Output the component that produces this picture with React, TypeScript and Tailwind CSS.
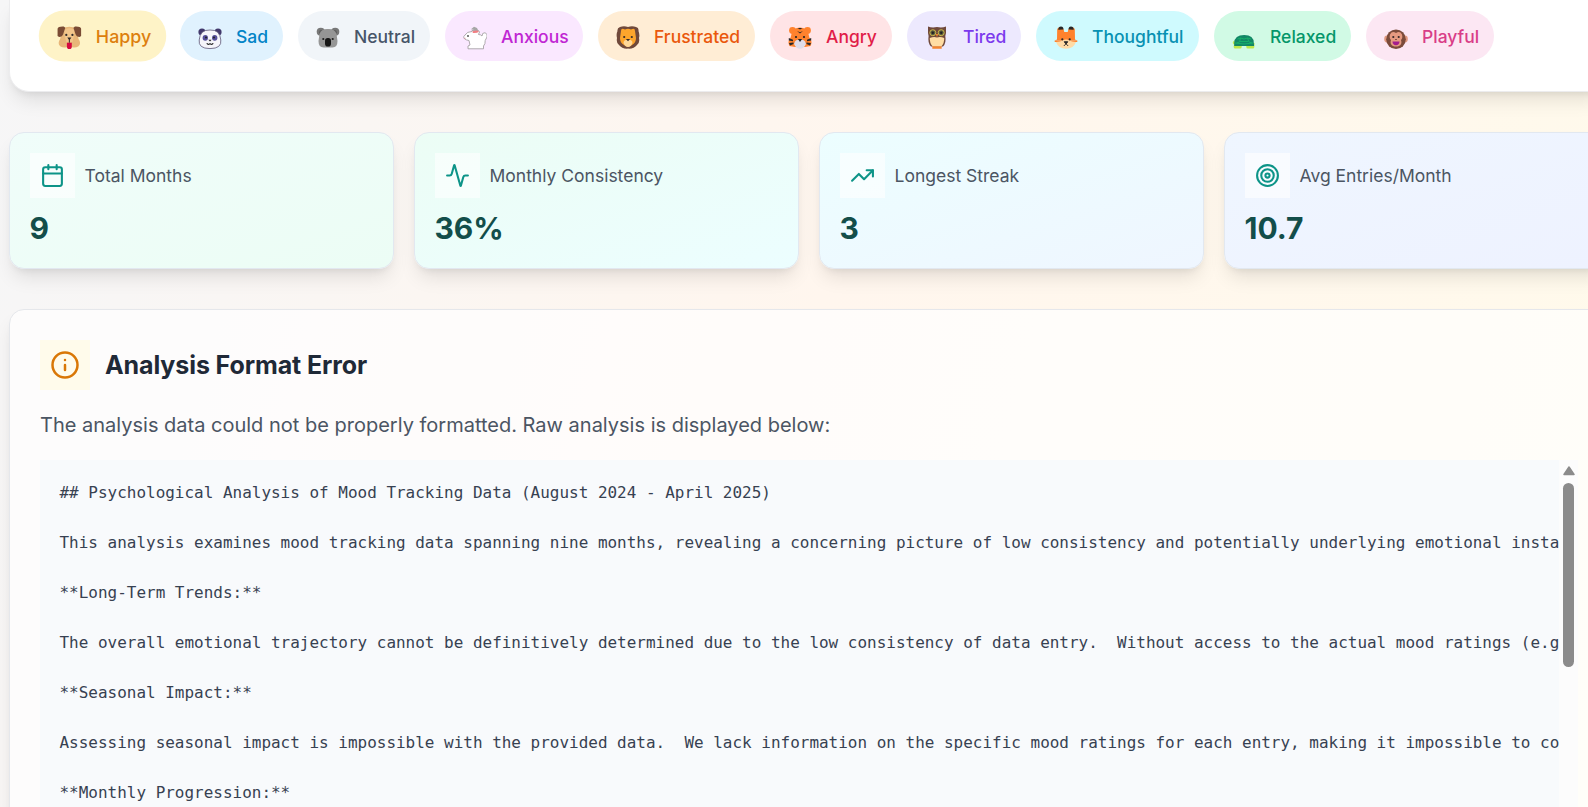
import type { ReactNode } from 'react';
import { Activity, Calendar, Info, Target, TrendingUp } from 'lucide-react';

const Dog = () => (
  <>
    <path d="M5 3Q12-1 19 3L21 13Q24 17 21 20Q18 22 15 21Q12 23 9 21Q6 22 3 20Q0 17 3 13Z" fill="#e8b679" />
    <path d="M7 4Q12 1 17 4L16.5 10L15 16H9L7.5 10Z" fill="#f2c58b" />
    <path d="M6.5 .8L8 2L6 8Q5 11 2 11L.4 10V3Q1 .5 6.5 .8ZM17.5 .8L16 2L18 8Q19 11 22 11L23.6 10V3Q23 .5 17.5 .8Z" fill="#7a4b35" />
    <circle cx="9" cy="9" r="1.1" fill="#312b2b" /><circle cx="15" cy="9" r="1.1" fill="#312b2b" />
    <path d="M10 11.5H14L12.5 13.6V16.5H11.5V13.6Z" fill="#312b2b" />
    <path d="M9.6 16.5H14.4V20Q14.4 22.8 12 22.8Q9.6 22.8 9.6 20Z" fill="#d5093f" />
  </>
);
const Panda = () => (
  <>
    <circle cx="4" cy="6" r="3.6" fill="#42396c" /><circle cx="20" cy="6" r="3.6" fill="#42396c" />
    <path d="M12 4Q22 3.5 22.8 14Q24 22.5 12 22.6Q0 22.5 1.2 14Q2 3.5 12 4Z" fill="#f5f5fa" stroke="#6c6785" strokeWidth=".9" />
    <ellipse cx="7.3" cy="11.8" rx="2.7" ry="2.9" fill="#554f99" /><ellipse cx="16.7" cy="11.8" rx="2.7" ry="2.9" fill="#554f99" />
    <circle cx="8" cy="11.6" r="1" fill="#222" /><circle cx="16" cy="11.6" r="1" fill="#222" />
    <path d="M10.4 13.8H13.6L12 15.6Z" fill="#222" />
    <path d="M9 17Q9.3 19.3 12 17.7Q14.7 19.3 15 17" fill="none" stroke="#222" strokeWidth="1.1" />
  </>
);
const Koala = () => (
  <>
    <circle cx="4.8" cy="5.8" r="4.1" fill="#777" /><circle cx="19.2" cy="5.8" r="4.1" fill="#777" />
    <circle cx="5.3" cy="6.3" r="2.2" fill="#5d5d5d" /><circle cx="18.7" cy="6.3" r="2.2" fill="#5d5d5d" />
    <path d="M12 3Q18.5 2.5 20.5 8L21.5 15Q21.5 21.5 16.5 21.5H7.5Q2.5 21.5 2.5 15L3.5 8Q5.5 2.5 12 3Z" fill="#969696" />
    <circle cx="7.3" cy="13" r="1.1" fill="#222" /><circle cx="16.7" cy="13" r="1.1" fill="#222" />
    <rect x="9" y="12" width="6" height="8.5" rx="2.8" fill="#171717" />
  </>
);
const Rabbit = () => (
  <>
    <path d="M8 3.2L11 .7L14 2L15.5 5Z" fill="#a6a6a6" />
    <path d="M2 9Q4 5.5 9 5.5L9 4.5H15.5Q17.5 5.5 15.5 8.5Q18 8.5 19 10Q19 6.5 22 6.7Q25 8 24 11L22.2 14.5Q22.5 18 20.5 20L20.5 22.8H5V20L7 19L6 14.5Q0 13.5 .8 10.5Z" fill="#fff" stroke="#a6a1a5" strokeWidth=".9" strokeLinejoin="round" />
    <path d="M9.5 5.3Q14 4 16 5.2Q14.5 7.4 9.8 7Z" fill="#f17f83" />
    <circle cx="5" cy="10" r=".9" fill="#444" /><path d="M1.2 12.3H2.6" stroke="#d68e98" strokeWidth=".8" />
  </>
);
const Lion = () => (
  <>
    <path d="M4 1Q8-.5 12 1Q16-.5 20 1Q23 1.5 22.5 5Q24 9 23 12Q24 17 21 19Q18 23 12 22.6Q6 23 3 19Q0 17 1 12Q0 8 1.5 5Q1 2 4 1Z" fill="#70493b" />
    <path d="M5 5Q5 1.5 9 3.5Q12 2 15 3.5Q19 1.5 19 5L20 12Q20 17 16 19Q12 22 8 19Q4 17 4 12Z" fill="#fda52c" />
    <path d="M12 13.5Q16.5 13.5 16.5 17Q15 21 12 21Q9 21 7.5 17Q7.5 13.5 12 13.5Z" fill="#ffd899" />
    <circle cx="8.2" cy="11" r="1.1" fill="#332a29" /><circle cx="15.8" cy="11" r="1.1" fill="#332a29" />
    <path d="M9.9 12.9H14.1L12 15.3Z" fill="#332a29" />
  </>
);
const Tiger = () => (
  <>
    <circle cx="4.5" cy="4.5" r="3.4" fill="#ff822d" /><circle cx="19.5" cy="4.5" r="3.4" fill="#ff822d" />
    <path d="M6 3Q12 0 18 3Q21 7 21.5 12Q25 15 22.5 20L17 21H7L1.5 20Q-1 15 2.5 12Q3 7 6 3Z" fill="#ff822d" />
    <path d="M9.5 2H14.5L12 3.5ZM9 5L12 6.2L15 5L12 7.6ZM.8 12L5 13.8V15.2L.8 14.5ZM1 17L5.5 16.5V18L2 19.5ZM23.2 12L19 13.8V15.2L23.2 14.5ZM23 17L18.5 16.5V18L22 19.5Z" fill="#2a2828" />
    <circle cx="8" cy="11" r="1.1" fill="#222" /><circle cx="16" cy="11" r="1.1" fill="#222" />
    <path d="M7 15.5Q8 13.5 12 13.5Q16 13.5 17 15.5L18 18Q16 22.8 12 22.8Q8 22.8 6 18Z" fill="#dfdce8" />
    <path d="M9.9 13H14.1L12 16Z" fill="#222" />
  </>
);
const Owl = () => (
  <>
    <path d="M3 .5Q7 2 12 1Q17 2 21 .5V7L20.3 10Q21.5 17 18 20.5H6Q2.5 17 3.6 10L3 7Z" fill="#70493b" />
    <path d="M4.8 12Q9 10.2 12 11.5Q15 10.2 19.2 12Q19.5 17 16.3 20.5H7.7Q4.5 17 4.8 12Z" fill="#ffdda3" />
    <circle cx="7.8" cy="6.7" r="3" fill="#5a5b40" stroke="#cab84a" strokeWidth="1" /><circle cx="16.2" cy="6.7" r="3" fill="#5a5b40" stroke="#cab84a" strokeWidth="1" />
    <circle cx="7.8" cy="6.7" r="1.2" fill="#212121" /><circle cx="16.2" cy="6.7" r="1.2" fill="#212121" />
    <path d="M10.8 8H13.2L12 11ZM7.3 20.2H16.7V22.7H7.3Z" fill="#f38631" />
  </>
);
const Fox = () => (
  <>
    <path d="M3.2 3Q6-1 9.5 3L10.3 6H13.7L14.5 3Q18-1 20.8 3L21 13.5L23.3 14.5H.7L3 13.5Z" fill="#ff822d" />
    <path d="M4.2 3.8Q4.5 .5 7 .5Q9.5 .5 9.5 3.6ZM14.5 3.6Q14.5 .5 17 .5Q19.5 .5 19.8 3.8Z" fill="#282828" />
    <path d="M.7 14.5H23.3V16H.7Z" fill="#ff822d" />
    <path d="M2 16Q6.5 15.5 8.5 14.5Q12 12.5 15.5 14.5Q17.5 15.5 22 16Q19.5 22.8 12 22.8Q4.5 22.8 2 16Z" fill="#ffdba6" />
    <circle cx="8.3" cy="13.3" r="1.1" fill="#282828" /><circle cx="15.7" cy="13.3" r="1.1" fill="#282828" />
    <path d="M10.2 15.8H13.8L12 18ZM9.8 20L12 17.8L14.2 20" fill="none" stroke="#282828" strokeWidth=".9" />
    <path d="M10 15.5H14L12 18Z" fill="#282828" />
  </>
);
const Turtle = () => (
  <>
    <path d="M2.5 14.5Q.7 15 .7 17Q1.5 19 3.5 19M18 17H22.5V19H18" fill="#bee849" />
    <rect x="1.7" y="18.5" width="8" height="4" rx="1.5" fill="#bee849" /><rect x="14.3" y="18.5" width="8" height="4" rx="1.5" fill="#bee849" />
    <path d="M2.2 20V17Q2.5 9 12.2 9Q21.8 9 21.8 17L22.2 20Z" fill="#128766" />
    <path d="M3 17Q12 19 21 17M5.5 13L8.5 12L12 13L15.5 12L19 13M8.5 12L7.5 16L4.5 17M15.5 12L17 16L20 17M8 15.5H16" fill="none" stroke="#18b36a" strokeWidth=".9" />
  </>
);
const Monkey = () => (
  <>
    <ellipse cx="3" cy="13" rx="2.8" ry="3.4" fill="#df987e" /><ellipse cx="21" cy="13" rx="2.8" ry="3.4" fill="#df987e" />
    <circle cx="12" cy="13.2" r="9.8" fill="#7b4b3a" />
    <path d="M12 7Q16 4.5 18 8.5Q19 12 17 14Q18.5 18 15 20Q12 21 9 20Q5.5 18 7 14Q5 12 6 8.5Q8 4.5 12 7Z" fill="#e59a80" />
    <circle cx="9.3" cy="11" r="1.1" fill="#352728" /><circle cx="14.7" cy="11" r="1.1" fill="#352728" />
    <path d="M11 13.5H13" stroke="#844f43" /><path d="M8.5 15.5H15.5Q15.3 19.3 12 19.3Q8.7 19.3 8.5 15.5Z" fill="#a31e8d" />
  </>
);

const moods: { name: string; tone: string; art: ReactNode }[] = [
  { name: 'Happy', tone: 'w-[125px] scale-[1.02] bg-[#fef3c7] text-[#dd7f0e]', art: <Dog /> },
  { name: 'Sad', tone: 'w-[103px] bg-[#e0f2fe] text-[#0284c7]', art: <Panda /> },
  { name: 'Neutral', tone: 'w-[132px] bg-[#f1f5f9] text-[#475569]', art: <Koala /> },
  { name: 'Anxious', tone: 'w-[138px] bg-[#fae8ff] text-[#c026d3]', art: <Rabbit /> },
  { name: 'Frustrated', tone: 'w-[157px] bg-[#ffedd5] text-[#ea580c]', art: <Lion /> },
  { name: 'Angry', tone: 'w-[122px] bg-[#ffe4e6] text-[#e11d48]', art: <Tiger /> },
  { name: 'Tired', tone: 'w-[114px] bg-[#ede9fe] text-[#7c3aed]', art: <Owl /> },
  { name: 'Thoughtful', tone: 'w-[163px] bg-[#cffafe] text-[#0891b2]', art: <Fox /> },
  { name: 'Relaxed', tone: 'w-[137px] bg-[#d1fae5] text-[#059669]', art: <Turtle /> },
  { name: 'Playful', tone: 'w-[128px] bg-[#fce7f3] text-[#d93d87]', art: <Monkey /> },
];

const stats = [
  { label: 'Total Months', value: '9', Icon: Calendar, tone: 'from-[#f0fdfa] to-[#ecfdf5]' },
  { label: 'Monthly Consistency', value: '36%', Icon: Activity, tone: 'from-[#ecfdf5] to-[#ecfeff]' },
  { label: 'Longest Streak', value: '3', Icon: TrendingUp, tone: 'from-[#ecfeff] to-[#eff6ff]' },
  { label: 'Avg Entries/Month', value: '10.7', Icon: Target, tone: 'from-[#eff6ff] to-[#eef2ff]' },
];

const report = `## Psychological Analysis of Mood Tracking Data (August 2024 - April 2025)

This analysis examines mood tracking data spanning nine months, revealing a concerning picture of low consistency and potentially underlying emotional insta

**Long-Term Trends:**

The overall emotional trajectory cannot be definitively determined due to the low consistency of data entry.  Without access to the actual mood ratings (e.g

**Seasonal Impact:**

Assessing seasonal impact is impossible with the provided data.  We lack information on the specific mood ratings for each entry, making it impossible to co

**Monthly Progression:**`;

export default function App() {
  return (
    <div className="h-[807px] w-full overflow-hidden bg-linear-[105deg] from-[#f6f6f7] via-[#fff6ee] to-[#fffaeb] font-['Inter',sans-serif]">
      <main className="ml-[9px] w-[1600px]">
        <section className="h-[92px] rounded-b-[20px] border-x border-b border-[#ececee] bg-white pt-[11px] pl-[30px] shadow-[0_12px_19px_-4px_rgba(0,0,0,0.1),0_5px_8px_-5px_rgba(0,0,0,0.1)]">
          <div className="flex gap-[15px]">
            {moods.map(({ name, tone, art }) => (
              <div key={name} className={`flex h-[50px] shrink-0 items-center rounded-full pl-[18px] text-[17.5px] font-medium ${tone}`}>
                <svg viewBox="0 0 24 24" className="mt-[3px] mr-[14px] size-6 shrink-0" aria-hidden="true">{art}</svg>
                <span className="pt-0.5">{name}</span>
              </div>
            ))}
          </div>
        </section>

        <section className="mt-10 grid grid-cols-4 gap-5">
          {stats.map(({ label, value, Icon, tone }) => (
            <article key={label} className={`h-[137px] rounded-[15px] border border-[#e2e8f0] bg-linear-to-br pt-5 pr-5 pl-[19.5px] shadow-[0_12px_19px_-4px_rgba(0,0,0,0.1),0_5px_8px_-5px_rgba(0,0,0,0.1)] ${tone}`}>
              <div className="flex items-center gap-2.5">
                <span className="flex size-[45px] items-center justify-center bg-white/60 text-[#0d9488]">
                  <Icon size={25} />
                </span>
                <h3 className="pt-0.5 text-[17.5px] text-[#4b5563]">{label}</h3>
              </div>
              <p className="mt-2.5 text-[30px] leading-10 font-bold text-[#134e4a]">{value}</p>
            </article>
          ))}
        </section>

        <section className="mt-10 h-[600px] rounded-[15px] border border-[#e5e7eb] bg-white/70 px-[30px] pt-[30px] shadow-[0_12px_19px_-4px_rgba(0,0,0,0.1),0_5px_8px_-5px_rgba(0,0,0,0.1)]">
          <header className="flex items-center gap-[15px]">
            <span className="flex size-[50px] items-center justify-center bg-[#fffbeb] text-[#d97706]">
              <Info size={30} />
            </span>
            <h2 className="pt-0.5 text-[25px] font-bold tracking-[-0.1px] text-[#1f2937]">Analysis Format Error</h2>
          </header>
          <p className="mt-5 text-[20px] leading-[30px] text-[#4b5563]">
            The analysis data could not be properly formatted. Raw analysis is displayed below:
          </p>
          <div className="mt-5 flex h-[500px] bg-[#f8fafc]">
            <pre className="w-[1519px] shrink-0 overflow-hidden pt-[19.5px] pl-[19.5px] font-['DejaVu_Sans_Mono',monospace] text-[15.98px] leading-[25px] text-[#374151]">{report}</pre>
            <div className="flex grow flex-col items-center bg-[#fcfcfc] pt-1.5">
              <svg viewBox="0 0 12 10" className="h-2.5 w-3" aria-hidden="true">
                <path d="M6 1L11 8.5H1Z" fill="#8b8b8b" stroke="#8b8b8b" strokeWidth="1.5" strokeLinejoin="round" />
              </svg>
              <div className="mt-[7px] h-[184px] w-[11px] rounded-full bg-[#8b8b8b]" />
            </div>
          </div>
        </section>
      </main>
    </div>
  );
}
